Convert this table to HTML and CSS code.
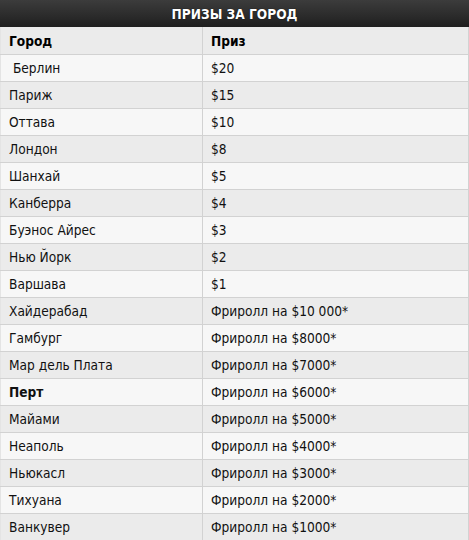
FILE: index.html
```html
<!DOCTYPE html>
<html lang="ru">
<head>
<meta charset="utf-8">
<link rel="stylesheet" href="styles.css">
</head>
<body>
<div class="prizes">
  <div class="title">ПРИЗЫ ЗА ГОРОД</div>
  <table class="grid">
    <thead>
      <tr><th class="c1">Город</th><th>Приз</th></tr>
    </thead>
    <tbody>
      <tr><td>&nbsp;Берлин</td><td>$20</td></tr>
      <tr><td>Париж</td><td>$15</td></tr>
      <tr><td>Оттава</td><td>$10</td></tr>
      <tr><td>Лондон</td><td>$8</td></tr>
      <tr><td>Шанхай</td><td>$5</td></tr>
      <tr><td>Канберра</td><td>$4</td></tr>
      <tr><td>Буэнос Айрес</td><td>$3</td></tr>
      <tr><td>Нью Йорк</td><td>$2</td></tr>
      <tr><td>Варшава</td><td>$1</td></tr>
      <tr><td>Хайдерабад</td><td>Фриролл на $10 000*</td></tr>
      <tr><td>Гамбург</td><td>Фриролл на $8000*</td></tr>
      <tr><td>Мар дель Плата</td><td>Фриролл на $7000*</td></tr>
      <tr><td><b>Перт</b></td><td>Фриролл на $6000*</td></tr>
      <tr><td>Майами</td><td>Фриролл на $5000*</td></tr>
      <tr><td>Неаполь</td><td>Фриролл на $4000*</td></tr>
      <tr><td>Ньюкасл</td><td>Фриролл на $3000*</td></tr>
      <tr><td>Тихуана</td><td>Фриролл на $2000*</td></tr>
      <tr><td>Ванкувер</td><td>Фриролл на $1000*</td></tr>
    </tbody>
  </table>
</div>
</body>
</html>
```
FILE: styles.css
```css
html, body {
  margin: 0;
  padding: 0;
  background: #ffffff;
}
.prizes {
  width: 469px;
  font-family: "DejaVu Sans Condensed", "DejaVu Sans", sans-serif;
  font-size: 13.6px;
  color: #111;
}
.title {
  height: 27px;
  line-height: 28px;
  text-align: center;
  color: #fff;
  font-weight: bold;
  font-size: 13.6px;
  background: linear-gradient(#3c3c3c, #1f1f1f);
  text-shadow: 0 0 1px #000;
}
.grid {
  width: 469px;
  border-collapse: collapse;
  table-layout: fixed;
}
.grid th, .grid td {
  padding: 1px 0 0 8px;
  border: 1px solid #d2d2d2;
  text-align: left;
  vertical-align: middle;
  box-sizing: border-box;
  height: 27px;
  white-space: nowrap;
}
.grid th {
  font-weight: bold;
  background: #ebebeb;
  color: #000;
  border-top: none;
}
.grid .c1 {
  width: 202px;
}
.grid td:first-child, .grid th:first-child {
  border-left: 1px solid #e4e4e4;
}
.grid tbody tr:nth-child(odd) td {
  background: #f7f7f7;
}
.grid tbody tr:nth-child(even) td {
  background: #ebebeb;
}
.grid tbody tr:last-child td {
  border-bottom: none;
}
```
